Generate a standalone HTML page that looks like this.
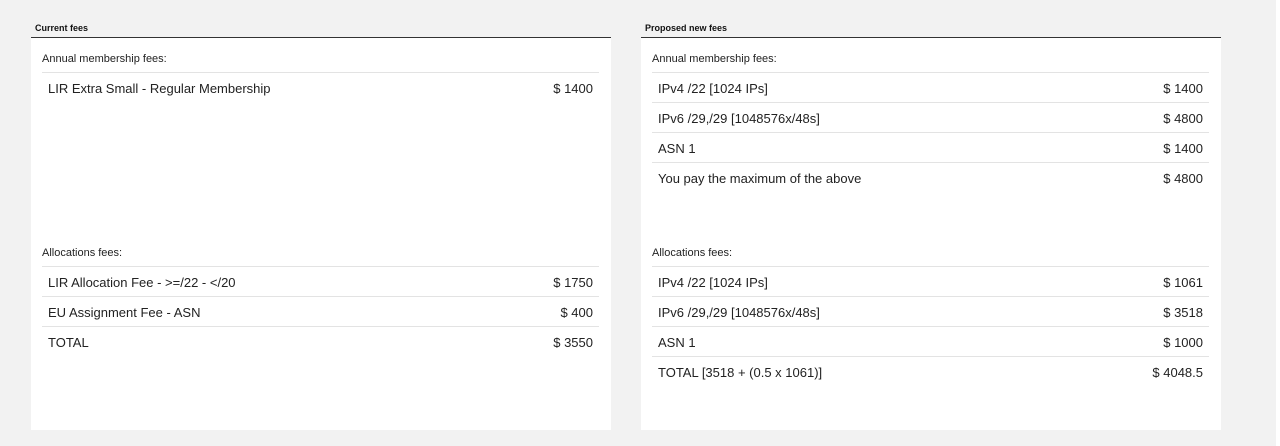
<!DOCTYPE html>
<html><head><style>
body{margin:0;width:1280px;height:446px;background:#f2f2f2;font-family:"Liberation Sans",sans-serif;color:#222;position:relative;overflow:hidden}
.edge{position:absolute;left:1276px;top:0;width:4px;height:446px;background:#fff}
.p{position:absolute;top:0;width:580px}
.h{position:absolute;top:23px;left:4px;font-size:9px;font-weight:bold;color:#111}
.hl{position:absolute;top:37px;left:0;width:580px;height:1px;background:#333}
.w{position:absolute;top:38px;left:0;width:580px;height:392px;background:#fff}
.lab{position:absolute;left:11px;font-size:11px;color:#222}
.ln{position:absolute;left:11px;width:557px;height:1px;background:#e3e3e3}
.r{position:absolute;left:17px;width:545px;font-size:13px;display:flex;justify-content:space-between}
</style></head><body>
<div class="edge"></div>
<div class="p" style="left:31px">
<div class="h">Current fees</div><div class="hl"></div><div class="w">
<div class="lab" style="top:15px">Annual membership fees:</div>
<div class="ln" style="top:34px"></div>
<div class="r" style="top:43px"><span>LIR Extra Small - Regular Membership</span><span>$ 1400</span></div>
<div class="lab" style="top:209px">Allocations fees:</div>
<div class="ln" style="top:228px"></div>
<div class="r" style="top:237px"><span>LIR Allocation Fee - &gt;=/22 - &lt;/20</span><span>$ 1750</span></div>
<div class="ln" style="top:258px"></div>
<div class="r" style="top:267px"><span>EU Assignment Fee - ASN</span><span>$ 400</span></div>
<div class="ln" style="top:288px"></div>
<div class="r" style="top:297px"><span>TOTAL</span><span>$ 3550</span></div>
</div></div>
<div class="p" style="left:641px">
<div class="h">Proposed new fees</div><div class="hl"></div><div class="w">
<div class="lab" style="top:15px">Annual membership fees:</div>
<div class="ln" style="top:34px"></div>
<div class="r" style="top:43px"><span>IPv4 /22 [1024 IPs]</span><span>$ 1400</span></div>
<div class="ln" style="top:64px"></div>
<div class="r" style="top:73px"><span>IPv6 /29,/29 [1048576x/48s]</span><span>$ 4800</span></div>
<div class="ln" style="top:94px"></div>
<div class="r" style="top:103px"><span>ASN 1</span><span>$ 1400</span></div>
<div class="ln" style="top:124px"></div>
<div class="r" style="top:133px"><span>You pay the maximum of the above</span><span>$ 4800</span></div>
<div class="lab" style="top:209px">Allocations fees:</div>
<div class="ln" style="top:228px"></div>
<div class="r" style="top:237px"><span>IPv4 /22 [1024 IPs]</span><span>$ 1061</span></div>
<div class="ln" style="top:258px"></div>
<div class="r" style="top:267px"><span>IPv6 /29,/29 [1048576x/48s]</span><span>$ 3518</span></div>
<div class="ln" style="top:288px"></div>
<div class="r" style="top:297px"><span>ASN 1</span><span>$ 1000</span></div>
<div class="ln" style="top:318px"></div>
<div class="r" style="top:327px"><span>TOTAL [3518 + (0.5 x 1061)]</span><span>$ 4048.5</span></div>
</div></div>
</body></html>
